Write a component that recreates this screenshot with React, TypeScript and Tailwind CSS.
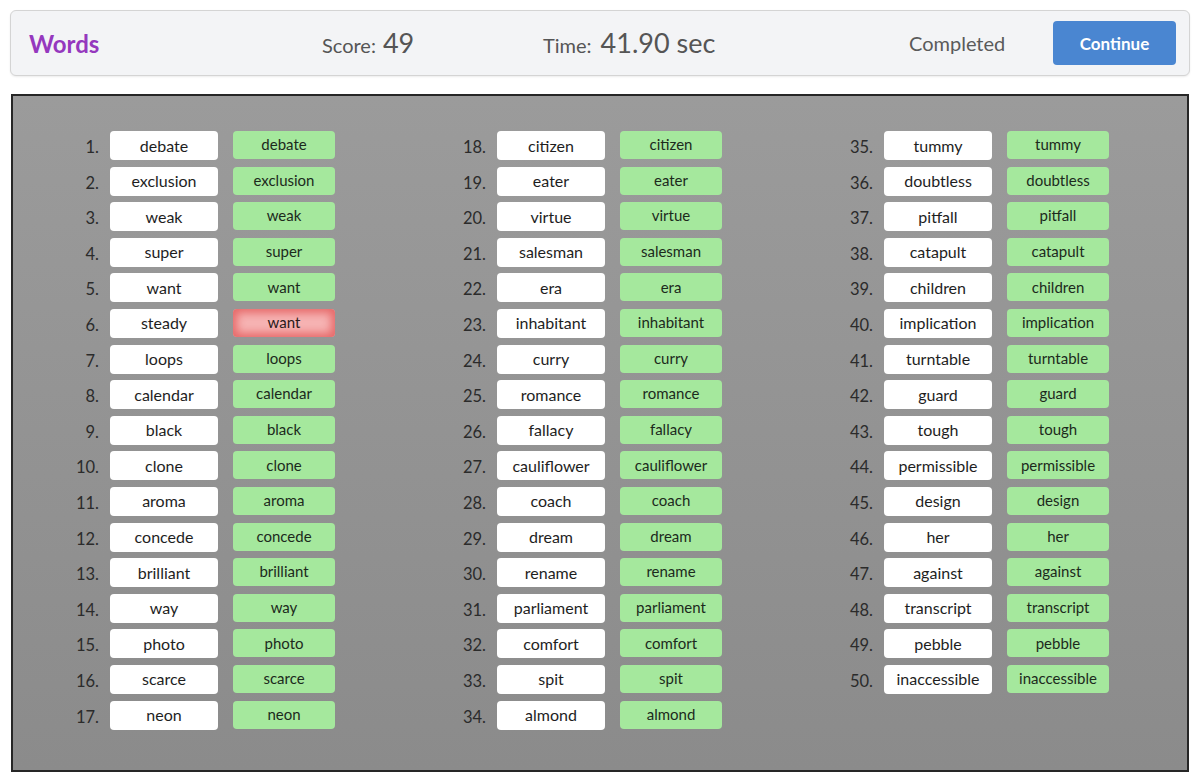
import React from "react";

type Entry = { word: string; answer: string };

const words: Entry[] = [
  "debate", "exclusion", "weak", "super", "want", "steady", "loops", "calendar", "black", "clone",
  "aroma", "concede", "brilliant", "way", "photo", "scarce", "neon", "citizen", "eater", "virtue",
  "salesman", "era", "inhabitant", "curry", "romance", "fallacy", "cauliflower", "coach", "dream", "rename",
  "parliament", "comfort", "spit", "almond", "tummy", "doubtless", "pitfall", "catapult", "children", "implication",
  "turntable", "guard", "tough", "permissible", "design", "her", "against", "transcript", "pebble", "inaccessible",
].map((w, i) => ({ word: w, answer: i === 5 ? "want" : w }));

const columns = [words.slice(0, 17), words.slice(17, 34), words.slice(34, 50)];

function Row({ n, entry }: { n: number; entry: Entry }) {
  const ok = entry.word === entry.answer;
  return (
    <div className="flex items-start h-[35.6px]">
      <span className="w-[42px] text-right text-[16.5px] text-[#2b2b2b] leading-[29px] pt-[2px]">{n}.</span>
      <div className="ml-[11px] w-[108px] h-[29px] rounded-[4px] bg-white flex items-center justify-center text-[16px] text-[#1e1e1e]">
        {entry.word}
      </div>
      {ok ? (
        <div className="ml-[15px] w-[102px] h-[28px] rounded-[4px] bg-[#a5e89d] flex items-center justify-center text-[15px] text-[#1c2a1c] pb-[1px]">
          {entry.answer}
        </div>
      ) : (
        <div className="ml-[15px] w-[102px] h-[28px] rounded-[4px] bg-[#f6b3b3] shadow-[inset_0_0_9px_4px_#e66a6a] flex items-center justify-center text-[15px] text-[#2a1a1a] pb-[1px]">
          {entry.answer}
        </div>
      )}
    </div>
  );
}

export default function App() {
  let counter = 0;
  return (
    <div className="w-[1200px] h-[779px] bg-white font-['Lato','Open_Sans',sans-serif] relative overflow-hidden">
      {/* top bar */}
      <div className="mx-[10px] mt-[10px] h-[66px] rounded-[6px] border border-[#d4d4d4] bg-[#f3f4f6] shadow-[0_1px_2px_rgba(0,0,0,0.08)] flex items-center">
        <div className="w-[311px] pl-[18px] text-[24px] font-bold text-[#9538be] pt-[2px]">Words</div>
        <div className="w-[221px] flex items-baseline gap-[7px] text-[#555]">
          <span className="text-[20px]">Score:</span>
          <span className="text-[27px]">49</span>
        </div>
        <div className="w-[366px] flex items-baseline gap-[9px] text-[#555]">
          <span className="text-[20px]">Time:</span>
          <span className="text-[27px]">41.90 sec</span>
        </div>
        <div className="w-[144px] text-[20px] text-[#5a5a5a]">Completed</div>
        <button className="w-[123px] h-[44px] rounded-[4px] bg-[#4a86d1] text-white text-[17px] font-bold pt-[2px]">
          Continue
        </button>
      </div>

      {/* word list */}
      <div className="mx-[11px] mt-[18px] h-[678px] border-2 border-[#262626] bg-gradient-to-b from-[#9b9b9b] to-[#8b8b8b] pt-[35px] pl-[44px] flex">
        {columns.map((col, ci) => (
          <div key={ci} className="w-[387px] shrink-0 flex flex-col">
            {col.map((entry) => {
              counter += 1;
              return <Row key={counter} n={counter} entry={entry} />;
            })}
          </div>
        ))}
      </div>
    </div>
  );
}
